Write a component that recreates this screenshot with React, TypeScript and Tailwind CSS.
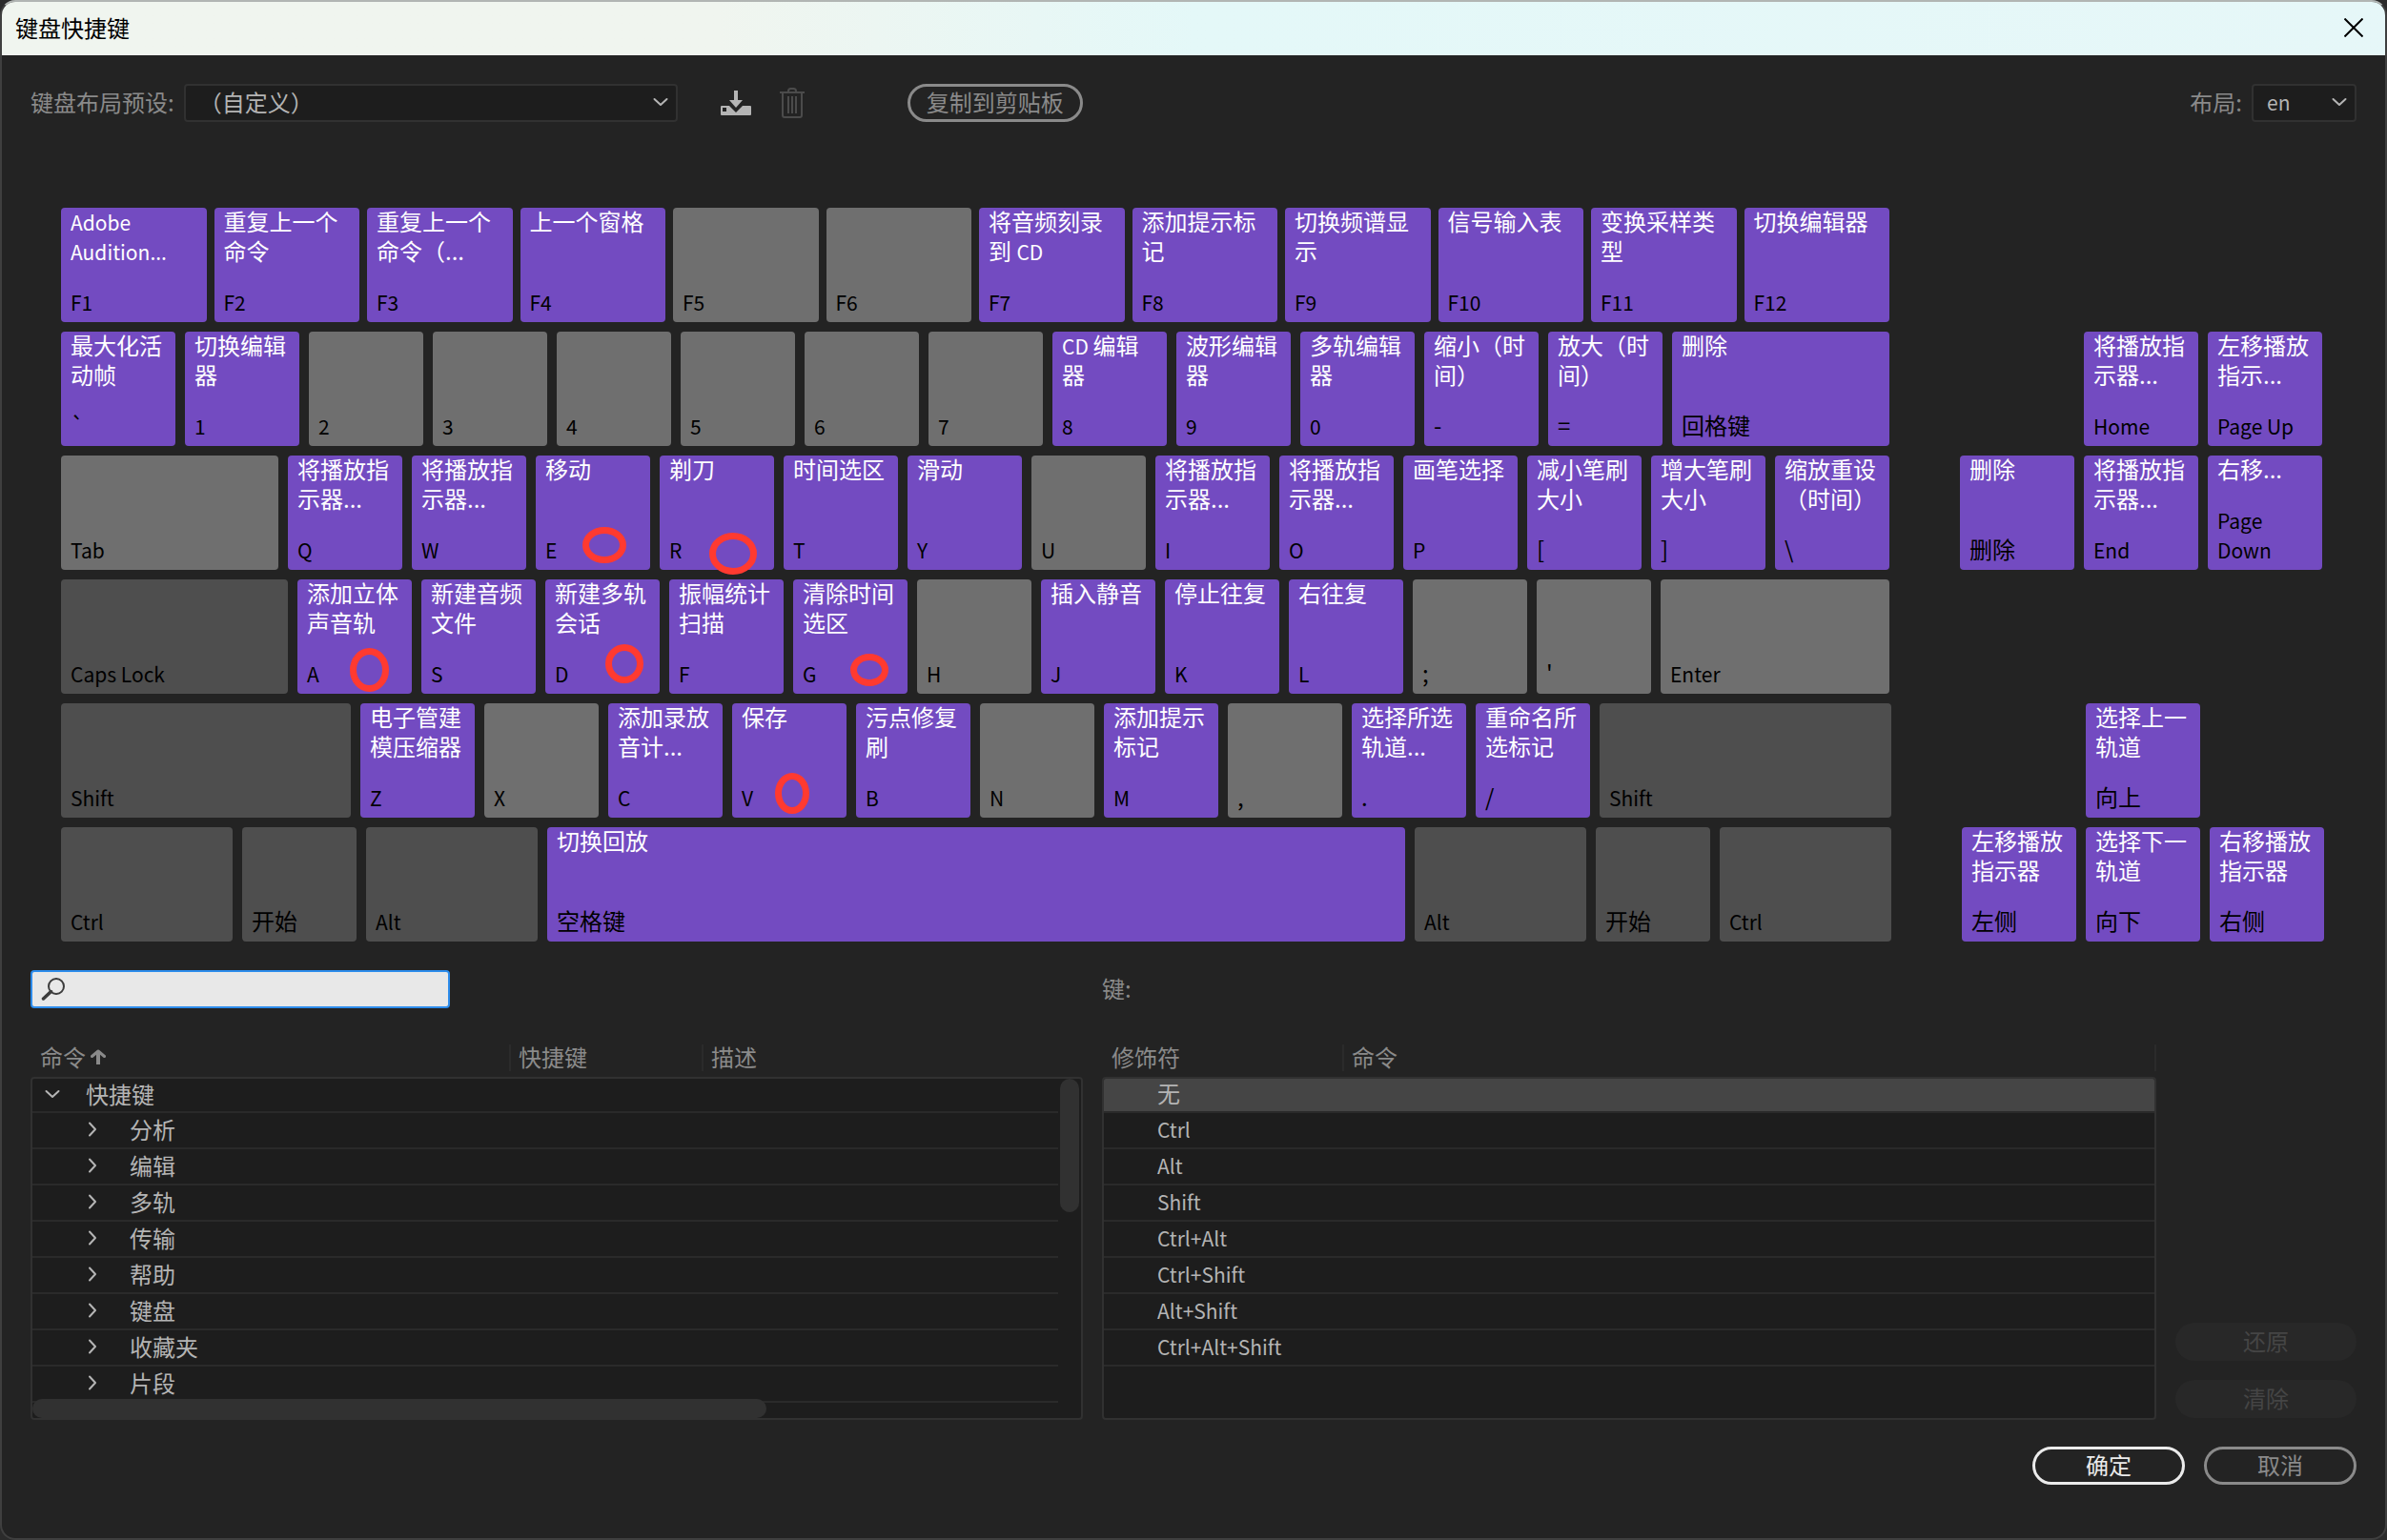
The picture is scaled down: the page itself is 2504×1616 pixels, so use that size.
import React from 'react'

type Tone = 'purple' | 'gray' | 'dark'

interface Ring {
  left: number
  top: number
  width: number
  height: number
}

interface KeyData {
  name: string
  command?: string
  tone?: Tone
  size?: number
  ring?: Ring
}

const tones: Record<Tone, string> = {
  purple: 'bg-[#734bc1]',
  gray: 'bg-[#6f6f6f]',
  dark: 'bg-[#4e4e4e]',
}

const functionRow: KeyData[] = [
  { name: 'F1', command: 'Adobe Audition...' },
  { name: 'F2', command: '重复上一个命令' },
  { name: 'F3', command: '重复上一个命令（...' },
  { name: 'F4', command: '上一个窗格' },
  { name: 'F5' },
  { name: 'F6' },
  { name: 'F7', command: '将音频刻录到 CD' },
  { name: 'F8', command: '添加提示标记' },
  { name: 'F9', command: '切换频谱显示' },
  { name: 'F10', command: '信号输入表' },
  { name: 'F11', command: '变换采样类型' },
  { name: 'F12', command: '切换编辑器' },
]

const numberRow: KeyData[] = [
  { name: '`', command: '最大化活动帧' },
  { name: '1', command: '切换编辑器' },
  { name: '2' },
  { name: '3' },
  { name: '4' },
  { name: '5' },
  { name: '6' },
  { name: '7' },
  { name: '8', command: 'CD 编辑器' },
  { name: '9', command: '波形编辑器' },
  { name: '0', command: '多轨编辑器' },
  { name: '-', command: '缩小（时间）' },
  { name: '=', command: '放大（时间）' },
  { name: '回格键', command: '删除', size: 228 },
]

const tabRow: KeyData[] = [
  { name: 'Tab', size: 228 },
  { name: 'Q', command: '将播放指示器...' },
  { name: 'W', command: '将播放指示器...' },
  { name: 'E', command: '移动', ring: { left: 49, top: 75, width: 46, height: 38 } },
  { name: 'R', command: '剃刀', ring: { left: 52, top: 81, width: 50, height: 44 } },
  { name: 'T', command: '时间选区' },
  { name: 'Y', command: '滑动' },
  { name: 'U' },
  { name: 'I', command: '将播放指示器...' },
  { name: 'O', command: '将播放指示器...' },
  { name: 'P', command: '画笔选择' },
  { name: '[', command: '减小笔刷大小' },
  { name: ']', command: '增大笔刷大小' },
  { name: '\\', command: '缩放重设（时间）' },
]

const capsRow: KeyData[] = [
  { name: 'Caps Lock', tone: 'dark', size: 238 },
  { name: 'A', command: '添加立体声音轨', ring: { left: 55, top: 72, width: 41, height: 46 } },
  { name: 'S', command: '新建音频文件' },
  { name: 'D', command: '新建多轨会话', ring: { left: 63, top: 68, width: 40, height: 41 } },
  { name: 'F', command: '振幅统计扫描' },
  { name: 'G', command: '清除时间选区', ring: { left: 60, top: 78, width: 40, height: 34 } },
  { name: 'H' },
  { name: 'J', command: '插入静音' },
  { name: 'K', command: '停止往复' },
  { name: 'L', command: '右往复' },
  { name: ';' },
  { name: "'" },
  { name: 'Enter', size: 240 },
]

const shiftRow: KeyData[] = [
  { name: 'Shift', tone: 'dark', size: 304 },
  { name: 'Z', command: '电子管建模压缩器' },
  { name: 'X' },
  { name: 'C', command: '添加录放音计...' },
  { name: 'V', command: '保存', ring: { left: 45, top: 73, width: 36, height: 43 } },
  { name: 'B', command: '污点修复刷' },
  { name: 'N' },
  { name: 'M', command: '添加提示标记' },
  { name: ',' },
  { name: '.', command: '选择所选轨道...' },
  { name: '/', command: '重命名所选标记' },
  { name: 'Shift', tone: 'dark', size: 306 },
]

const spaceRow: KeyData[] = [
  { name: 'Ctrl', tone: 'dark', size: 180 },
  { name: '开始', tone: 'dark' },
  { name: 'Alt', tone: 'dark', size: 180 },
  { name: '空格键', command: '切换回放', size: 900 },
  { name: 'Alt', tone: 'dark', size: 180 },
  { name: '开始', tone: 'dark' },
  { name: 'Ctrl', tone: 'dark', size: 180 },
]

// null leaves an empty slot in the navigation block
const navTop: (KeyData | null)[] = [
  null,
  { name: 'Home', command: '将播放指示器...' },
  { name: 'Page Up', command: '左移播放指示...' },
  { name: '删除', command: '删除' },
  { name: 'End', command: '将播放指示器...' },
  { name: 'Page Down', command: '右移...' },
]

const navArrows: (KeyData | null)[] = [
  null,
  { name: '向上', command: '选择上一轨道' },
  null,
  { name: '左侧', command: '左移播放指示器' },
  { name: '向下', command: '选择下一轨道' },
  { name: '右侧', command: '右移播放指示器' },
]

const commandGroups = ['分析', '编辑', '多轨', '传输', '帮助', '键盘', '收藏夹', '片段']

const modifiers = ['无', 'Ctrl', 'Alt', 'Shift', 'Ctrl+Alt', 'Ctrl+Shift', 'Alt+Shift', 'Ctrl+Alt+Shift']

// Latin runs are set a little smaller than the Chinese around them
function Mixed({ text }: { text: string }) {
  return (
    <>
      {text.split(/([A-Za-z0-9][\x20-\x7e]*)/).map((part, idx) =>
        idx % 2 ? <span key={idx} className="text-[21px] leading-none">{part}</span> : part
      )}
    </>
  )
}

function Key({ data }: { data: KeyData }) {
  const tone = data.tone || (data.command ? 'purple' : 'gray')
  const size = data.size || 120
  return (
    <button
      type="button"
      className={`relative flex h-[120px] min-w-0 flex-col justify-between rounded-[4px] px-[10px] pb-[7px] text-left leading-[31px] ${tones[tone]}`}
      style={{ flex: `${size} ${size} ${size}px` }}
    >
      <span className="-mt-0.5 text-white"><Mixed text={data.command || ''} /></span>
      <span className="text-black"><Mixed text={data.name} /></span>
      {data.ring && (
        <svg className="absolute z-10 overflow-visible" style={data.ring}>
          <ellipse
            cx={data.ring.width / 2}
            cy={data.ring.height / 2}
            rx={data.ring.width / 2 - 3.5}
            ry={data.ring.height / 2 - 3.5}
            fill="none"
            stroke="#ff3a30"
            strokeWidth="7"
          />
        </svg>
      )}
    </button>
  )
}

function KeyRow({ keys, className = 'gap-[10px]' }: { keys: KeyData[]; className?: string }) {
  return (
    <div className={`flex ${className}`}>
      {keys.map((data, idx) => <Key key={idx} data={data} />)}
    </div>
  )
}

function KeyGrid({ keys, className }: { keys: (KeyData | null)[]; className: string }) {
  return (
    <div className={`grid grid-cols-3 gap-[10px] ${className}`}>
      {keys.map((data, idx) => data ? <Key key={idx} data={data} /> : <span key={idx} />)}
    </div>
  )
}

function Chevron({ className = '' }: { className?: string }) {
  return (
    <svg
      viewBox="0 0 16 10"
      className={`h-[10px] w-4 ${className}`}
      fill="none"
      stroke="currentColor"
      strokeWidth="2"
      strokeLinecap="round"
      strokeLinejoin="round"
    >
      <path d="M1.500 2 8 8 14.500 2" />
    </svg>
  )
}

function Select({ id, value, className }: { id: string; value: string; className: string }) {
  return (
    <div className="relative flex items-center text-[#b4b4b4]">
      <select
        id={id}
        className={`h-10 appearance-none rounded-[4px] border-2 border-[#313131] bg-[#1d1d1d] pb-0.5 pl-[14px] outline-none ${className}`}
      >
        <option>{value}</option>
      </select>
      <Chevron className="pointer-events-none absolute right-[10px] mb-0.5" />
    </div>
  )
}

export default function App() {
  return (
    <div className="min-h-screen bg-[#2b2b2b] font-['Noto_Sans_CJK_SC',sans-serif] text-2xl text-[#8a8a8a]">
      <div className="flex min-h-screen flex-col overflow-hidden rounded-2xl border-2 border-[#3f3f3f] border-t-[#b1b5b3] bg-[#232323]">
        {/* Title bar */}
        <header className="flex h-14 items-center justify-between bg-linear-to-r from-[#f0f5ef] from-30% via-[#e4f8f8] via-50% to-[#e6f7f8] pr-[23px] pb-0.5 pl-[14px] text-black">
          <h1>键盘快捷键</h1>
          <button type="button" aria-label="关闭">
            <svg viewBox="0 0 20 20" className="h-5 w-5" stroke="currentColor" strokeWidth="2">
              <path d="M0.5 0.5 19.5 19.5M19.5 0.5 0.5 19.5" />
            </svg>
          </button>
        </header>

        {/* Preset toolbar */}
        <div className="flex items-center px-[30px] pt-[30px]">
          <label htmlFor="preset" className="mr-[10px] pb-0.5">键盘布局预设:</label>
          <Select id="preset" value="（自定义）" className="w-[518px]" />
          <button type="button" aria-label="保存预设" className="ml-[45px] text-[#b4b4b4]">
            <svg viewBox="0 0 32 26" className="h-[26px] w-8" fill="currentColor">
              <path d="M14 0h4v10h5l-7 8-7-8h5z" />
              <path d="M1 16h8l7 7 7-7h8q1 0 1 1v8q0 1-1 1H1q-1 0-1-1v-8q0-1 1-1zm1 2v4h4v-4z" fillRule="evenodd" />
            </svg>
          </button>
          <button type="button" aria-label="删除预设" className="ml-[30px] text-[#4b4b4b]">
            <svg viewBox="0 0 26 32" className="h-8 w-[26px]" fill="none" stroke="currentColor" strokeWidth="2">
              <path d="M0 5h26M9 5V3.500Q9 1 11.500 1h3Q17 1 17 3.500V5M3 5v24q0 2 2 2h16q2 0 2-2V5M9 9v18M13 9v18M17 9v18" />
            </svg>
          </button>
          <button type="button" className="ml-[108px] h-10 rounded-full border-3 border-[#8a8a8a] px-[17px] pb-0.5 leading-none">
            复制到剪贴板
          </button>
          <label htmlFor="layout" className="mr-[10px] ml-auto pb-0.5">布局:</label>
          <Select id="layout" value="en" className="w-[110px] text-[21px]" />
        </div>

        {/* Keyboard */}
        <div className="mt-[90px] flex gap-[72px] pr-16 pl-[62px]">
          <div className="flex flex-[1920] flex-col gap-[10px]">
            <KeyRow keys={functionRow} className="gap-2 pr-0.5" />
            <KeyRow keys={numberRow} className="gap-[10px] pr-0.5" />
            <KeyRow keys={tabRow} className="gap-[10px] pr-0.5" />
            <KeyRow keys={capsRow} className="gap-[10px] pr-0.5" />
            <KeyRow keys={shiftRow} />
            <KeyRow keys={spaceRow} />
          </div>
          <div className="flex flex-[382] flex-col justify-between pt-[130px]">
            <KeyGrid keys={navTop} className="pr-0.5" />
            <KeyGrid keys={navArrows} className="pl-0.5" />
          </div>
        </div>

        {/* Search and key readout */}
        <div className="mt-[30px] flex gap-5 px-[30px]">
          <div className="flex-[1104]">
            <label className="flex h-10 w-[440px] items-center rounded-[4px] border-2 border-[#2d8ceb] bg-[#e8e8e8] px-[9px] text-[#3c3c3c]">
              <svg viewBox="0 0 26 24" className="h-6 w-[26px] shrink-0" fill="none" stroke="currentColor" strokeWidth="2">
                <circle cx="16" cy="9" r="8" />
                <path d="M10.500 14.500 2.500 22" strokeWidth="3.500" strokeLinecap="round" />
              </svg>
              <input type="text" aria-label="搜索命令" className="ml-2 w-full bg-transparent outline-none" />
            </label>
          </div>
          <p className="flex-[1106] leading-[38px]">键:</p>
          <div className="w-[190px]" />
        </div>

        {/* Command list, modifier list */}
        <div className="mt-[38px] flex gap-5 px-[30px]">
          <table className="block min-w-0 flex-[1104] text-left">
            <thead className="block pb-[6px]">
              <tr className="flex h-7 leading-[25px]">
                <th className="flex w-[504px] items-center border-r-2 border-[#2b2b2b] pl-[10px] pb-[3px] font-normal">
                  命令
                  <svg
                    viewBox="0 0 16 16"
                    className="ml-[5px] h-4 w-4"
                    fill="none"
                    stroke="currentColor"
                    strokeWidth="4"
                    strokeLinejoin="round"
                  >
                    <path d="M8 16V3" />
                    <path d="M1.500 7.500 8 2 14.500 7.500" strokeWidth="3" strokeLinecap="round" />
                  </svg>
                </th>
                <th className="w-[202px] border-r-2 border-[#2b2b2b] pl-2 font-normal">快捷键</th>
                <th className="pl-2 font-normal">描述</th>
              </tr>
            </thead>
            <tbody className="relative block h-[360px] overflow-hidden rounded-[4px] border-2 border-[#313131] bg-[#1d1d1d] text-[#b4b4b4]">
              <tr className="mr-6 flex h-9 border-b-2 border-[#2a2a2a]">
                <td className="flex items-center pb-[3px] pl-[13px] leading-none">
                  <Chevron className="mr-[27px]" />
                  快捷键
                </td>
              </tr>
              {commandGroups.map((group) => (
                <tr key={group} className="mr-6 flex h-[38px] border-b-2 border-[#2a2a2a]">
                  <td className="flex items-center pb-[3px] pl-[55px] leading-none">
                    <Chevron className="mr-[31px] -rotate-90" />
                    {group}
                  </td>
                </tr>
              ))}
              {/* Scrollbars */}
              <tr aria-hidden="true">
                <td className="absolute top-0 right-0.5 h-[140px] w-5 rounded-full bg-[#313131] p-0" />
                <td className="absolute bottom-0 left-0 h-5 w-[770px] rounded-full bg-[#313131] p-0" />
              </tr>
            </tbody>
          </table>

          <table className="block min-w-0 flex-[1106] text-left">
            <thead className="block pb-[6px]">
              <tr className="flex h-7 leading-[25px]">
                <th className="w-[254px] border-r-2 border-[#2b2b2b] pl-[10px] font-normal">修饰符</th>
                <th className="flex-1 border-r-2 border-[#2b2b2b] pl-2 font-normal">命令</th>
              </tr>
            </thead>
            <tbody className="block h-[360px] overflow-hidden rounded-[4px] border-2 border-[#313131] bg-[#1d1d1d] text-[#b4b4b4]">
              {modifiers.map((modifier, idx) => (
                <tr
                  key={modifier}
                  className={`flex items-center border-b-2 border-[#2a2a2a] ${idx === 0 ? 'h-9 bg-[#454545]' : 'h-[38px]'}`}
                >
                  <td className="pb-1 pl-14 leading-none"><Mixed text={modifier} /></td>
                </tr>
              ))}
            </tbody>
          </table>

          <div className="flex w-[190px] flex-col justify-end gap-5 pb-0.5">
            <button type="button" disabled className="h-10 rounded-full bg-[#282828] pb-0.5 leading-none text-[#454545]">还原</button>
            <button type="button" disabled className="h-10 rounded-full bg-[#282828] pb-0.5 leading-none text-[#454545]">清除</button>
          </div>
        </div>

        {/* Dialog actions */}
        <footer className="mt-7 flex justify-end gap-5 px-[30px] pb-14">
          <button type="button" className="h-10 w-40 rounded-full border-3 border-[#ebebeb] pb-0.5 leading-none text-[#ebebeb]">确定</button>
          <button type="button" className="h-10 w-40 rounded-full border-3 border-[#8a8a8a] pb-0.5 leading-none">取消</button>
        </footer>
      </div>
    </div>
  )
}
